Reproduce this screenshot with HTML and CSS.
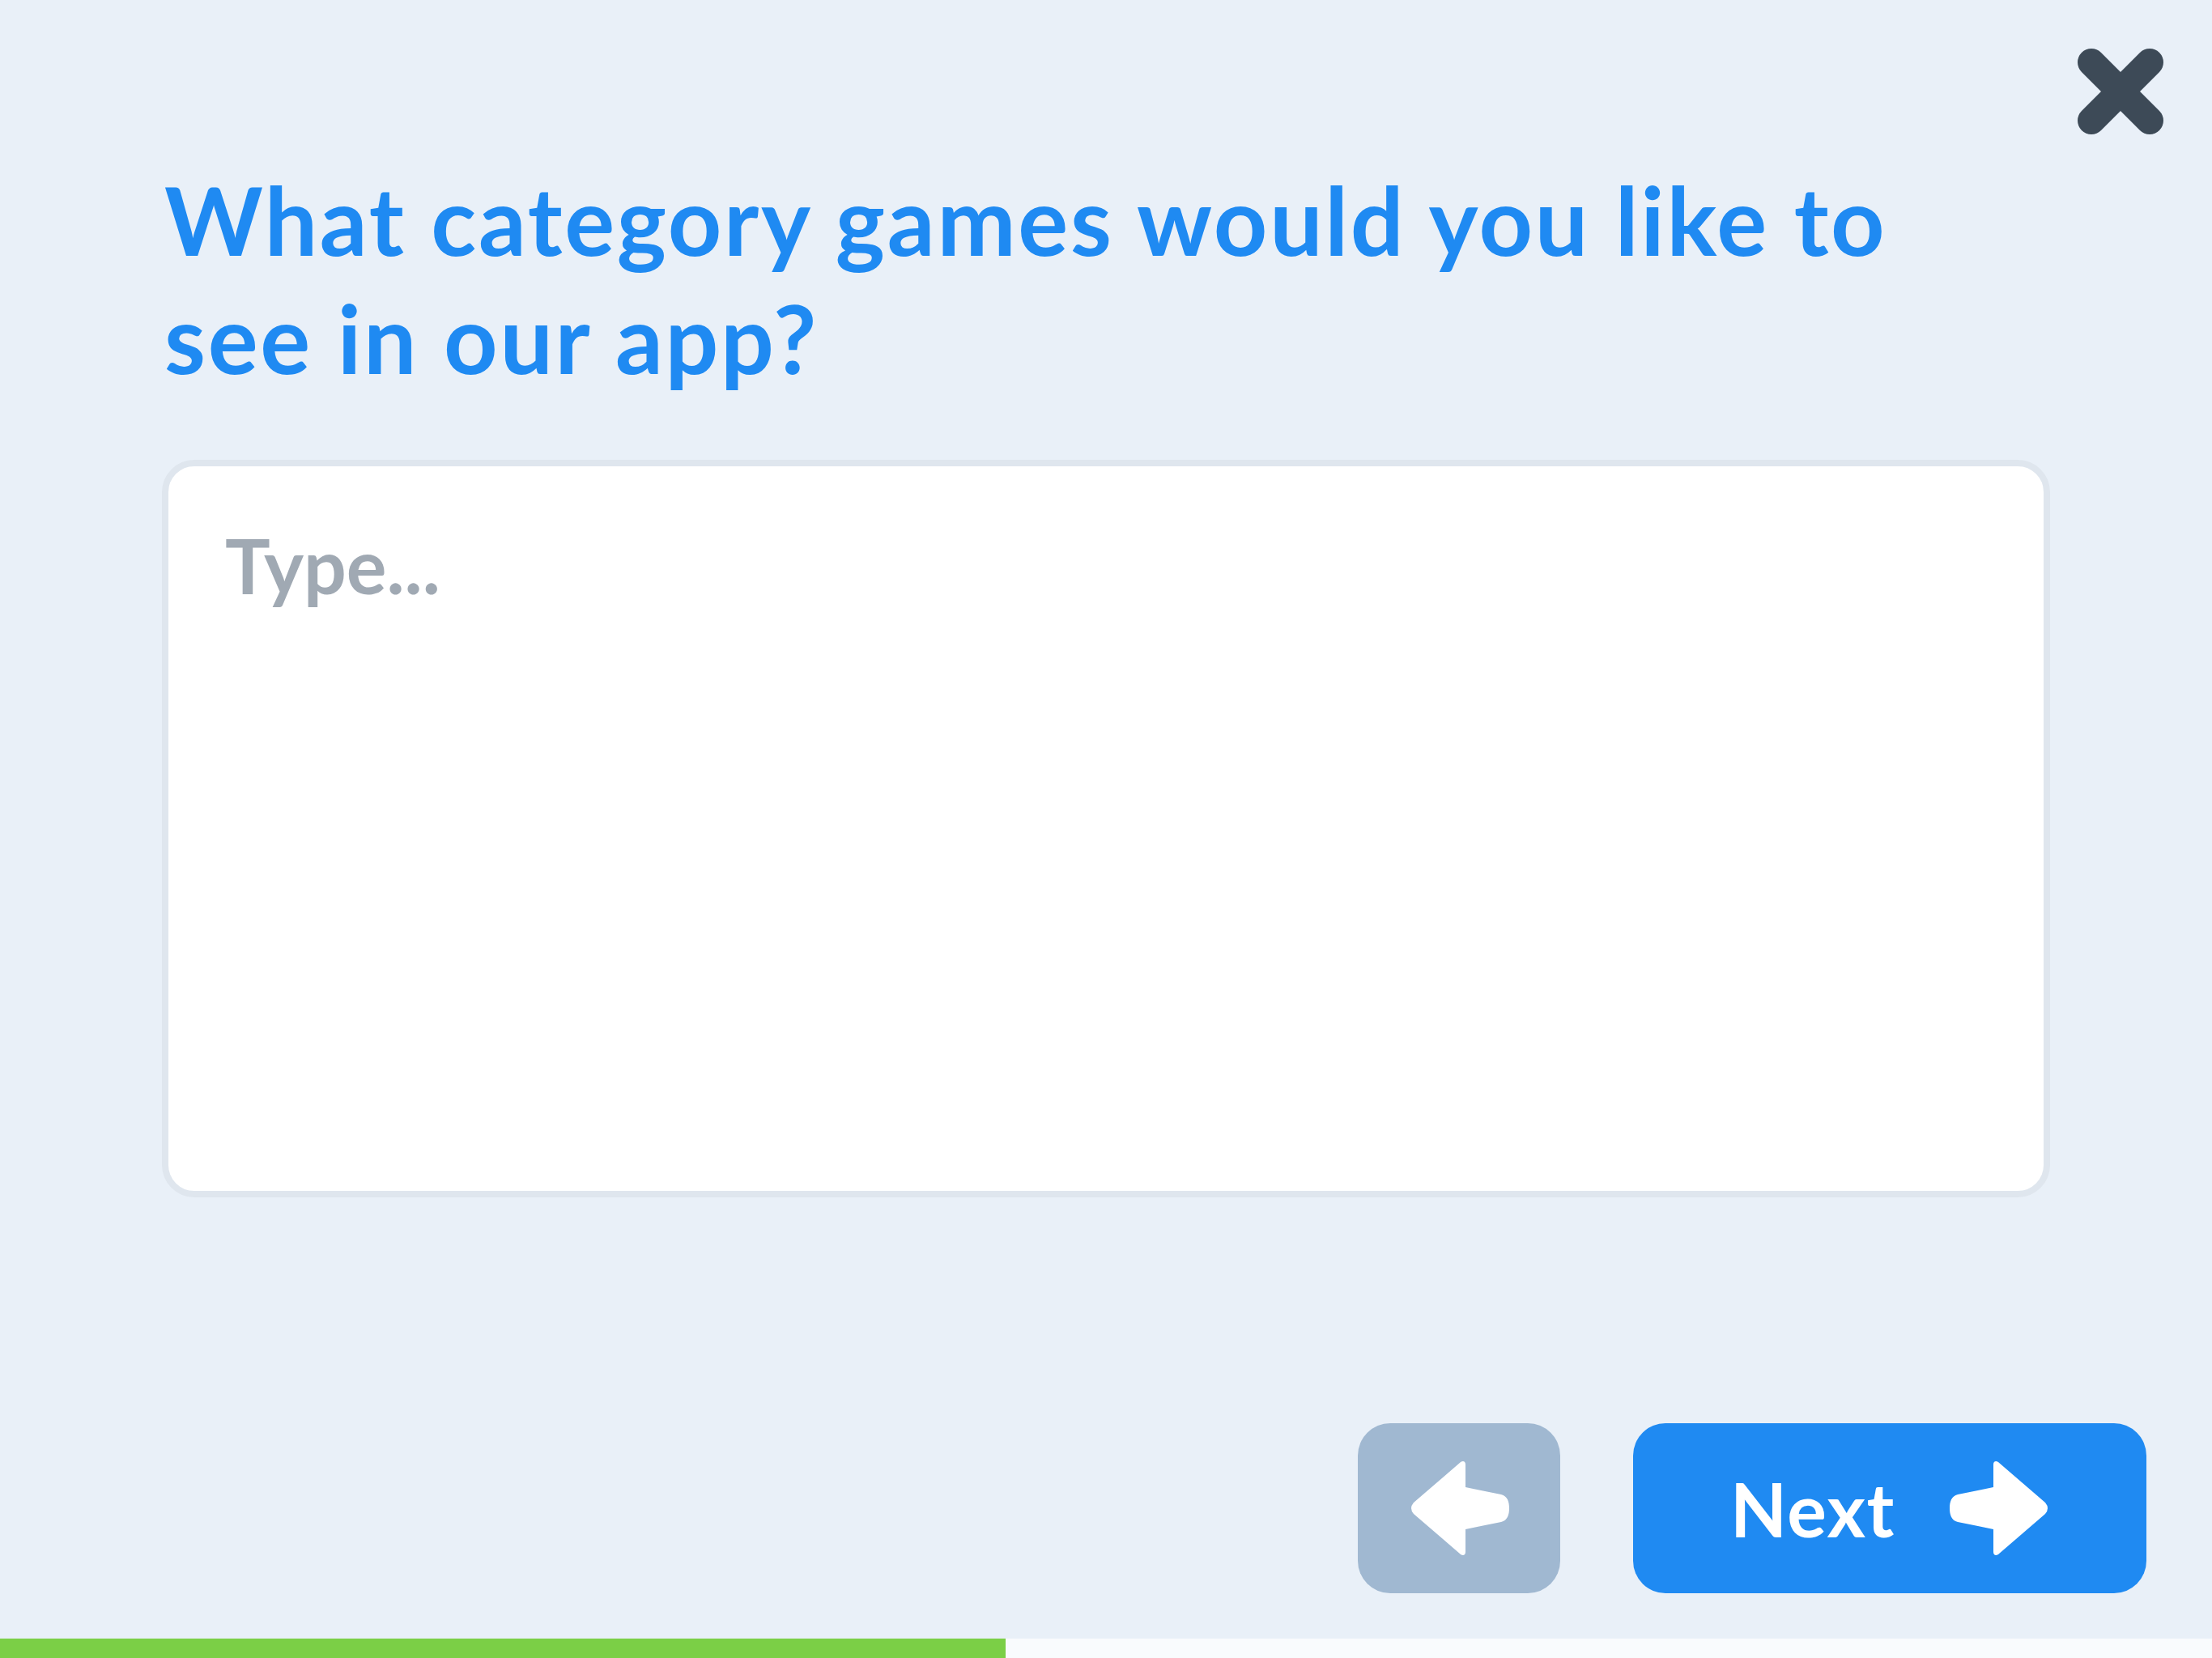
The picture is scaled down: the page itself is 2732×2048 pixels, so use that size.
FILE: index.html
```html
<!DOCTYPE html>
<html lang="en">
<head>
<meta charset="utf-8">
<title>Survey</title>
<link rel="stylesheet" href="styles.css">
</head>
<body>
<div class="page">
  <button class="close" aria-label="Close">
    <svg width="106" height="106" viewBox="0 0 106 106"><path d="M17 17 L89 89 M89 17 L17 89" stroke="#3d4a57" stroke-width="34" stroke-linecap="round" fill="none"/></svg>
  </button>
  <main class="content">
    <h1 class="question">What category games would you like to<br>see in our app?</h1>
    <textarea class="answer" placeholder="Type..."></textarea>
  </main>
  <footer class="footer">
    <button class="btn btn-back" aria-label="Back">
      <svg class="arrow arrow-left" width="123" height="116" viewBox="0 0 123 116"><path d="M54 4 C54 0 57 -1 60 1 L118 51 Q124 58 118 65 L60 115 C57 117 54 116 54 112 L54 84 C40 81 25 78 10 75 C2 73 0 66 0 58 C0 50 2 43 10 41 C25 38 40 35 54 32 Z" fill="#fff"/></svg>
    </button>
    <button class="btn btn-next">
      <span class="btn-label">Next</span>
      <svg class="arrow" width="123" height="116" viewBox="0 0 123 116"><path d="M54 4 C54 0 57 -1 60 1 L118 51 Q124 58 118 65 L60 115 C57 117 54 116 54 112 L54 84 C40 81 25 78 10 75 C2 73 0 66 0 58 C0 50 2 43 10 41 C25 38 40 35 54 32 Z" fill="#fff"/></svg>
    </button>
  </footer>
  <div class="progress"><div class="progress-fill" style="width:45.46%"></div></div>
</div>
</body>
</html>
```
FILE: styles.css
```css
html, body {
  margin: 0;
  padding: 0;
}
body {
  background: #e9f0f8;
  font-family: "Lato", "Noto Sans", sans-serif;
}
.page {
  position: relative;
  width: 2732px;
  height: 2048px;
  display: flex;
  flex-direction: column;
  overflow: hidden;
}
.close {
  position: absolute;
  top: 60px;
  left: 2566px;
  width: 106px;
  height: 106px;
  padding: 0;
  border: 0;
  background: none;
  display: block;
}
.close svg { display: block; }
.content {
  flex: 1;
  padding: 199px 200px 0 200px;
  display: flex;
  flex-direction: column;
}
.question {
  margin: 0 0 77px 3px;
  font-size: 116px;
  line-height: 146px;
  font-weight: 700;
  color: #1f8af2;
  letter-spacing: 2.7px;
}
.answer {
  box-sizing: border-box;
  width: 2332px;
  height: 911px;
  border: 8px solid #dfe6ee;
  border-radius: 40px;
  background: #fff;
  padding: 67px 70px;
  font-family: "Lato", "Noto Sans", sans-serif;
  font-size: 93px;
  line-height: 1.2;
  font-weight: 700;
  color: #3d4a57;
  resize: none;
  outline: none;
  display: block;
}
.answer::placeholder {
  color: #a0a9b3;
  opacity: 1;
}
.footer {
  display: flex;
  justify-content: flex-end;
  gap: 90px;
  padding: 0 81px 56px 0;
}
.btn {
  height: 210px;
  border: 0;
  border-radius: 40px;
  display: flex;
  align-items: center;
  justify-content: center;
  padding: 0;
  font-family: "Lato", "Noto Sans", sans-serif;
}
.btn-back {
  width: 250px;
  background: #a0b8d1;
}
.btn-next {
  width: 634px;
  background: #1f8af2;
  gap: 67px;
}
.btn-label {
  color: #fff;
  font-size: 91px;
  font-weight: 700;
  line-height: 1;
  letter-spacing: 1.5px;
}
.arrow { display: block; }
.arrow-left { transform: scaleX(-1); }
.progress {
  height: 24px;
  background: #f9fbfd;
}
.progress-fill {
  height: 100%;
  background: #7bcf46;
}
```
